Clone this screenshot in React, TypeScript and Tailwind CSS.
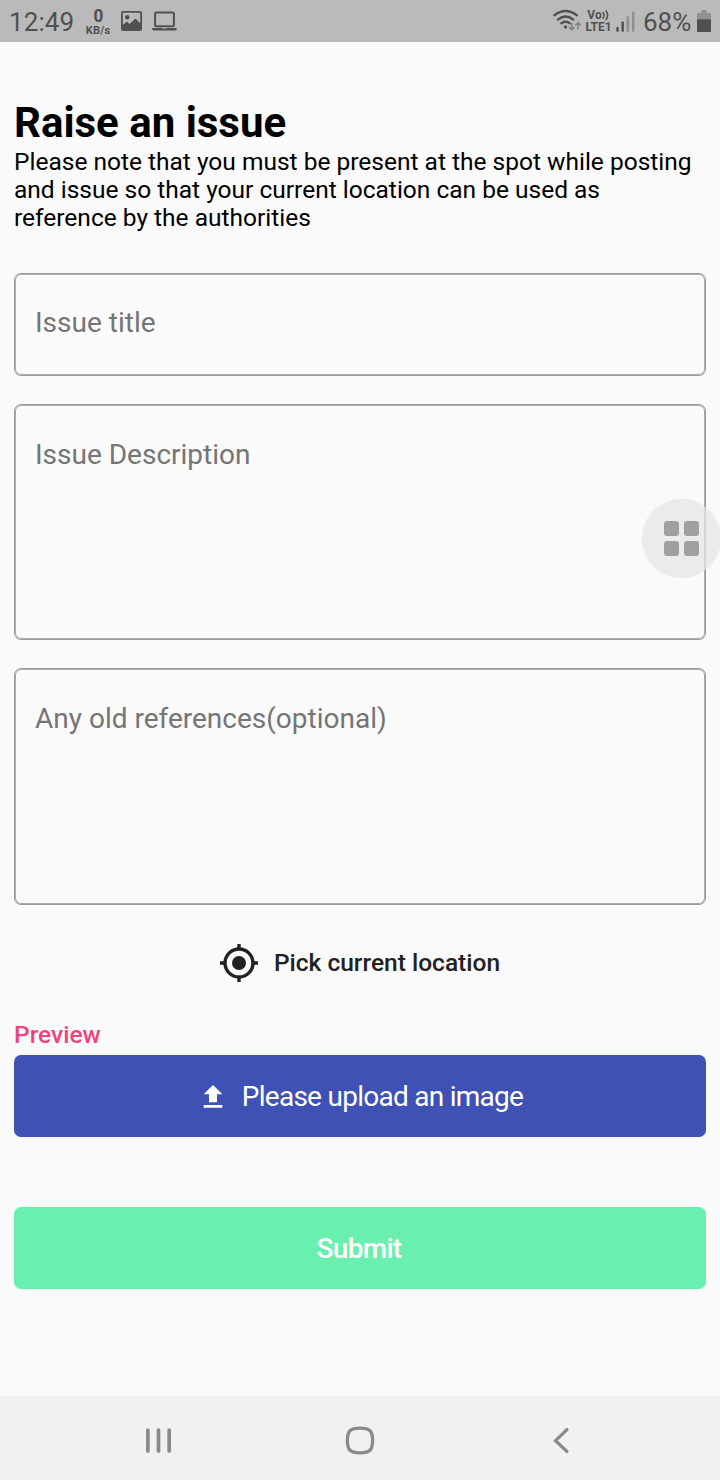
import React from "react";

function StatusBar() {
  return (
    <header className="flex h-[42px] shrink-0 items-center bg-[#bababa] pl-[9px] pr-[9px] text-[#505050]">
      <span className="w-[66px] whitespace-nowrap pt-[2px] text-[26px] leading-[42px] tracking-[0.1px]">12:49</span>
      <div className="ml-[10px] flex w-[26px] flex-col items-center font-bold">
        <span className="scale-x-[0.9] text-[19px] leading-[18px]">0</span>
        <span className="text-[11px] leading-[11px] tracking-[0.2px]">KB/s</span>
      </div>
      <svg className="ml-[10px] h-[20px] w-[21px]" viewBox="0 0 21 20" fill="none">
        <rect x="0.9" y="0.9" width="19.2" height="18.2" rx="1.2" stroke="#505050" strokeWidth="1.8" />
        <circle cx="6.3" cy="6.3" r="2.2" fill="#505050" />
        <path d="M1 14.500 6 10.500 8.500 13 14.500 7.500 20 13v6H1z" fill="#505050" />
      </svg>
      <svg className="ml-[10px] h-[20px] w-[26px]" viewBox="0 0 26 20" fill="none">
        <rect x="3.1" y="1.6" width="18.8" height="13.6" rx="1.2" stroke="#505050" strokeWidth="2" />
        <path d="M0.200 17h24.400v1a1.4 1.4 0 0 1-1.4 1.4H1.600a1.4 1.4 0 0 1-1.4-1.4z" fill="#505050" />
        <path d="M10.500 17.3h4" stroke="#bababa" strokeWidth="0.8" />
      </svg>
      <div className="flex-1" />
      <svg className="h-[24px] w-[30px]" viewBox="0 0 30 24" fill="none" strokeLinecap="round">
        <path d="M1.300 6.400Q12.600-2.400 23.900 6.400M4.900 10.600Q12.600 4.400 20.300 10.600M8.300 14.400Q12.600 10.800 16.900 14.400" stroke="#505050" strokeWidth="2.200" />
        <circle cx="12.500" cy="18" r="1.700" fill="#505050" />
        <path d="M18.800 14v6.800m-2.700-2.600 2.700 2.700 2.700-2.700M25.100 20.500v-6.800m-2.700 2.600 2.700-2.700 2.700 2.700" stroke="#858585" strokeWidth="1.700" strokeLinecap="butt" />
      </svg>
      <div className="ml-[2px] flex w-[27px] flex-col items-center font-bold">
        <span className="flex items-center text-[12px] leading-[12px]">
          Vo
          <svg className="h-[11px] w-[8px]" viewBox="0 0 8 11" fill="none" stroke="#505050" strokeWidth="1.5" strokeLinecap="round">
            <path d="M1 2.5Q3 5.3 1 8.4M4 1Q7.3 5.3 4 9.8" />
          </svg>
        </span>
        <span className="text-[12px] leading-[12px]">LTE1</span>
      </div>
      <svg className="ml-[4px] h-[21px] w-[19px]" viewBox="0 0 19 21">
        <rect x="0.3" y="16" width="2.400" height="4.7" rx="0.8" fill="#505050" />
        <rect x="5.500" y="10.5" width="2.400" height="10.2" rx="0.8" fill="#505050" />
        <rect x="10.7" y="5.3" width="2.400" height="15.4" rx="0.8" fill="#909090" />
        <rect x="16" y="0.5" width="2.400" height="20.2" rx="0.8" fill="#909090" />
      </svg>
      <span className="ml-[8px] w-[50px] whitespace-nowrap pt-[2px] text-[26px] leading-[42px]">68%</span>
      <svg className="ml-[4px] h-[22px] w-[14px]" viewBox="0 0 14 22">
        <path d="M4.5 0h5v3H13a1 1 0 0 1 1 1v6H0V4a1 1 0 0 1 1-1h3.500z" fill="#909090" />
        <path d="M0 9.300h14V21a1 1 0 0 1-1 1H1a1 1 0 0 1-1-1z" fill="#505050" />
      </svg>
    </header>
  );
}

function AssistiveButton() {
  return (
    <div className="absolute right-[-16px] top-[94px] grid h-[79px] w-[79px] place-content-center rounded-full bg-[#e6e6e6]/75 shadow-[0_0_2px_rgba(0,0,0,0.06)]">
      <div className="grid grid-cols-2 gap-[5px]">
        <i className="size-[15px] rounded-[3px] bg-[#a0a0a0]" />
        <i className="size-[15px] rounded-[3px] bg-[#a0a0a0]" />
        <i className="size-[15px] rounded-[3px] bg-[#a0a0a0]" />
        <i className="size-[15px] rounded-[3px] bg-[#a0a0a0]" />
      </div>
    </div>
  );
}

function Field({ label, className, children }: { label: string; className: string; children?: React.ReactNode }) {
  return (
    <div className={`relative rounded-[7px] border border-[#9b9b9b] pl-[20px] text-[28px] leading-[33px] text-[#757575] shadow-[inset_0_0_0_1px_#acacac] ${className}`}>
      {label}
      {children}
    </div>
  );
}

export default function App() {
  return (
    <div className="flex h-[1480px] w-[720px] flex-col overflow-hidden bg-[#fafafa] font-[Roboto,sans-serif] text-black">
      <StatusBar />
      <main className="flex flex-1 flex-col px-[14px] pt-[56px]">
        <h1 className="text-[42px] font-bold leading-[49px]">Raise an issue</h1>
        <p className="mt-px whitespace-nowrap text-[24.5px] leading-[28px]">
          Please note that you must be present at the spot while posting
          <br />
          and issue so that your current location can be used as
          <br />
          reference by the authorities
        </p>
        <Field label="Issue title" className="mt-[41px] h-[103px] pt-[32px]" />
        <Field label="Issue Description" className="mt-[28px] h-[236px] pt-[33px]">
          <AssistiveButton />
        </Field>
        <Field label="Any old references(optional)" className="mt-[28px] h-[237px] pt-[33px]" />
        <button className="mt-[37px] flex h-[42px] items-center justify-center pr-[2px] text-[24.5px] font-medium text-[#212121]">
          <svg className="mr-[14px] size-[42px]" viewBox="0 0 42 42" fill="none" stroke="#212121">
            <circle cx="21" cy="21" r="14" strokeWidth="3.4" />
            <circle cx="21" cy="21" r="7" fill="#212121" stroke="none" />
            <path d="M21 2v6M21 34v6M2 21h6M34 21h6" strokeWidth="3.4" />
          </svg>
          Pick current location
        </button>
        <div className="mt-[36px] text-[24.5px] font-medium leading-[29px] text-[#ec4480]">Preview</div>
        <button className="mt-[6px] flex h-[82px] items-center justify-center rounded-[7px] bg-[#3f51b5] pt-[2px] text-[28px] tracking-[-0.73px] text-white">
          <svg className="mr-[13px] size-[32px]" viewBox="0 0 24 24" fill="currentColor">
            <path d="M9 16h6v-6h4l-7-7-7 7h4zM5 18h14v2H5z" />
          </svg>
          Please upload an image
        </button>
        <button className="mt-[70px] flex h-[82px] items-center justify-center rounded-[7px] bg-[#69f0ae] pr-[2px] pt-[2px] text-[28px] font-medium tracking-[-0.7px] text-white">
          Submit
        </button>
      </main>
      <nav className="flex h-[84px] shrink-0 items-center justify-between bg-[#f1f1f1] pb-[2px] pl-[144px] pr-[149px] pt-[8px] text-[#8a8a8a]">
        <svg className="h-[30px] w-[28px]" viewBox="0 0 28 30" fill="none" stroke="currentColor" strokeWidth="3.700" strokeLinecap="round">
          <path d="M3.900 4V25M14.500 4V25M25.200 4V25" />
        </svg>
        <svg className="-ml-[4px] size-[30px]" viewBox="0 0 30 30" fill="none" stroke="currentColor" strokeWidth="3.3">
          <path d="M15 2.200C24.800 2.200 27.600 5 27.600 14.500S24.800 26.800 15 26.800 2.400 24 2.400 14.500 5.200 2.200 15 2.200Z" />
        </svg>
        <svg className="h-[30px] w-[20px]" viewBox="0 0 20 30" fill="none" stroke="currentColor" strokeWidth="3.2" strokeLinecap="round">
          <path d="M16 3.500 4.500 14.700 16 25.500" />
        </svg>
      </nav>
    </div>
  );
}
